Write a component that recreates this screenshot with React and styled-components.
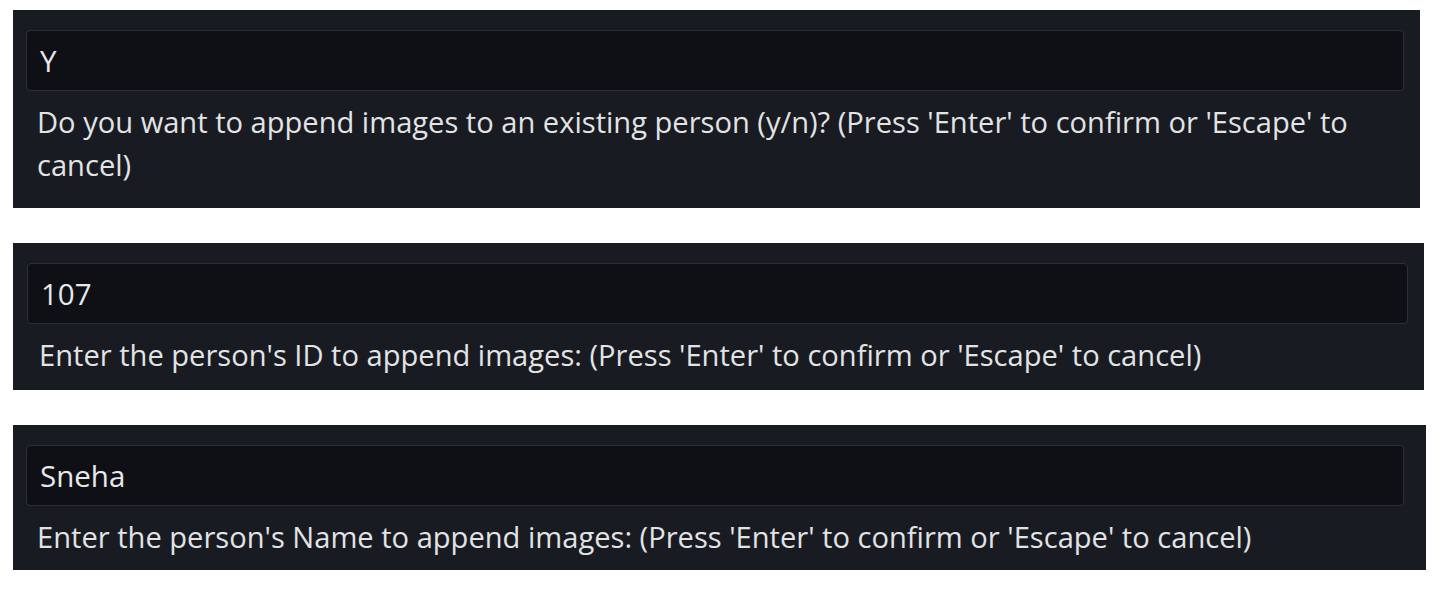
import React from "react";
import styled, { createGlobalStyle } from "styled-components";

const Global = createGlobalStyle`
  html, body { margin: 0; padding: 0; background: #ffffff; }
  body { font-family: "Open Sans", "Noto Sans", sans-serif; }
`;

const Page = styled.div`
  display: flex;
  flex-direction: column;
  align-items: flex-start;
  gap: 35px;
  padding: 10px 0 0 13px;
`;

const Panel = styled.section`
  box-sizing: border-box;
  width: ${(p) => p.$w}px;
  background: #181b22;
  padding: 20px ${(p) => p.$pr}px ${(p) => p.$pb}px ${(p) => p.$pl}px;
  display: flex;
  flex-direction: column;
`;

const InputBox = styled.div`
  box-sizing: border-box;
  height: 61px;
  background: #0e1016;
  border: 1.5px solid #2c3038;
  border-radius: 4px;
  display: flex;
  align-items: center;
  padding-left: 13px;
  color: #e8e8e8;
  font-size: 29.5px;
`;

const Message = styled.p`
  margin: 10px 0 0 ${(p) => p.$ml}px;
  color: #e3e3e3;
  font-size: 29.1px;
  line-height: 43px;
`;

const prompts = [
  {
    w: 1407, pl: 13, pr: 16, pb: 21, ml: 11, value: "Y",
    msg: "Do you want to append images to an existing person (y/n)? (Press 'Enter' to confirm or 'Escape' to cancel)",
  },
  {
    w: 1411, pl: 14, pr: 16, pb: 13, ml: 12, value: "107",
    msg: "Enter the person's ID to append images: (Press 'Enter' to confirm or 'Escape' to cancel)",
  },
  {
    w: 1413, pl: 13, pr: 22, pb: 11, ml: 11, value: "Sneha",
    msg: "Enter the person's Name to append images: (Press 'Enter' to confirm or 'Escape' to cancel)",
  },
];

export default function App() {
  return (
    <>
      <Global />
      <Page>
        {prompts.map((p, i) => (
          <Panel key={i} $w={p.w} $pl={p.pl} $pr={p.pr} $pb={p.pb}>
            <InputBox>{p.value}</InputBox>
            <Message $ml={p.ml}>{p.msg}</Message>
          </Panel>
        ))}
      </Page>
    </>
  );
}
